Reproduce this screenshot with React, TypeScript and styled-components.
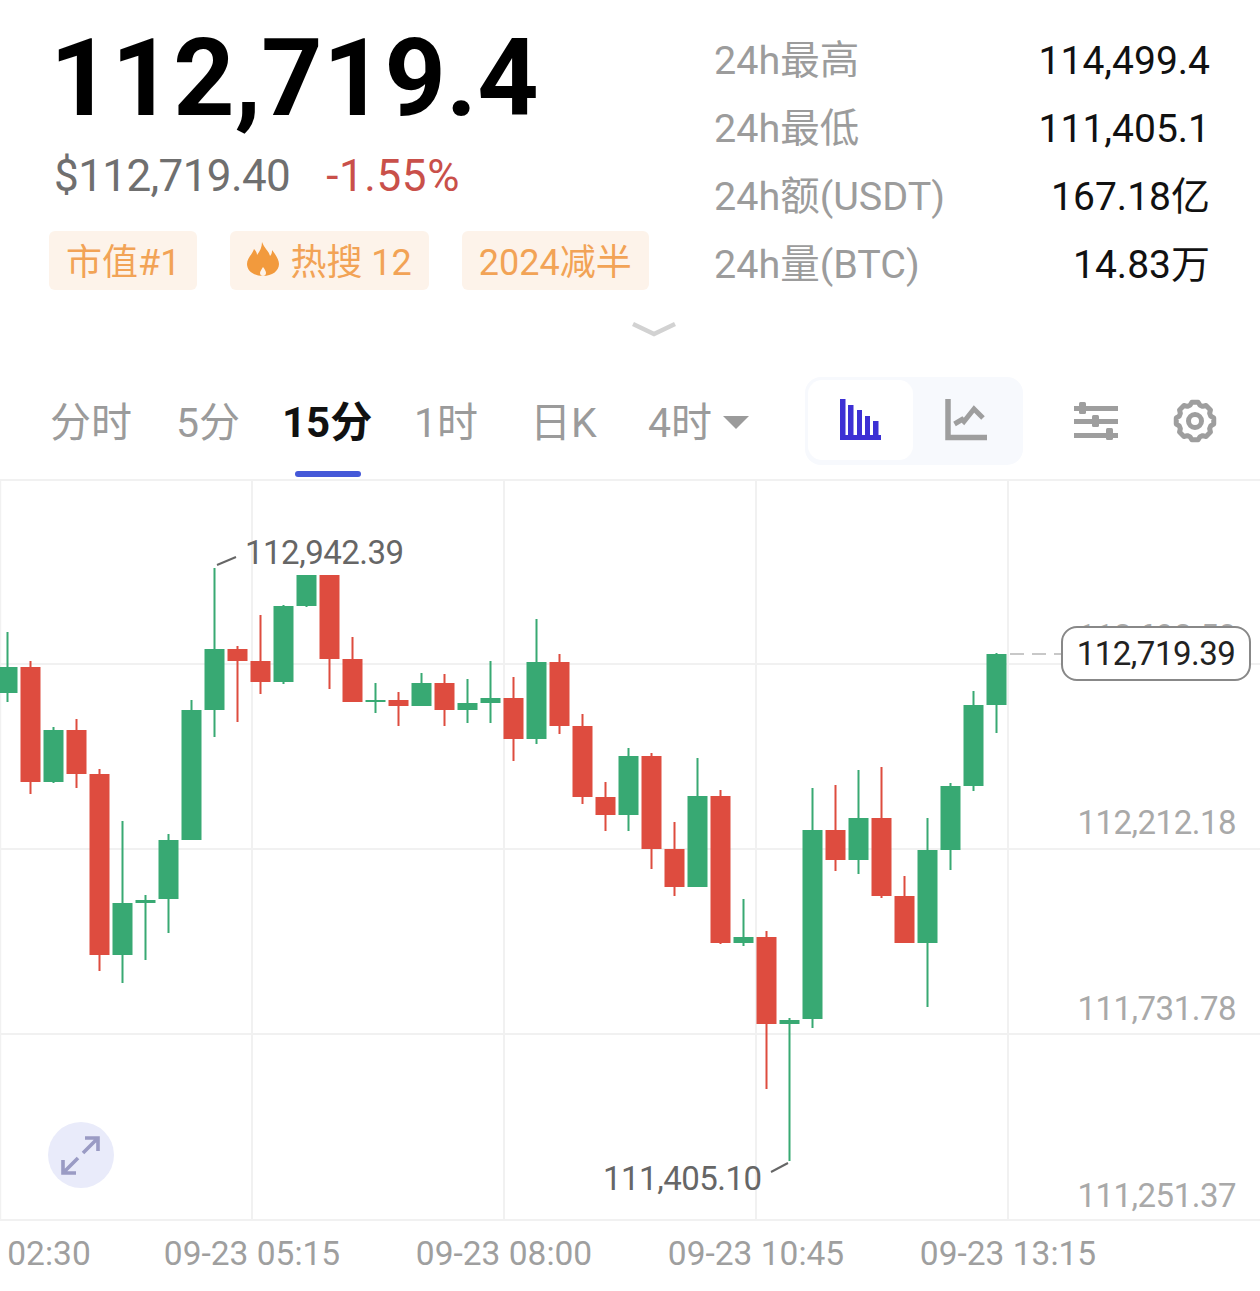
import React from "react";
import styled, { createGlobalStyle } from "styled-components";

const FONT = `Roboto, "Noto Sans CJK SC", sans-serif`;

const Global = createGlobalStyle`
  html, body { margin: 0; padding: 0; background: #fff; }
  body { font-family: ${FONT}; }
`;

const Page = styled.div`
  width: 1260px;
  height: 1291px;
  overflow: hidden;
  background: #fff;
  display: flex;
  flex-direction: column;
`;

const Header = styled.header`
  height: 313px;
  display: flex;
  justify-content: space-between;
  padding: 0 50px 0 49px;
  box-sizing: border-box;
`;

const Summary = styled.div`
  display: flex;
  flex-direction: column;
`;

const LastPrice = styled.div`
  margin: 25px 0 0 1px;
  height: 107px;
  font-size: 107px;
  line-height: 107px;
  font-weight: 700;
  color: #000;
  letter-spacing: 0.2px;
  white-space: nowrap;
`;

const Quote = styled.div`
  margin: 20px 0 0 5px;
  display: flex;
  gap: 36px;
  font-size: 44px;
  line-height: 48px;
  letter-spacing: -0.6px;
`;

const Fiat = styled.span`
  color: #6f6f6f;
`;

const Change = styled.span`
  color: #c9504a;
  letter-spacing: 0.6px;
`;

const Tags = styled.div`
  margin-top: 31px;
  display: flex;
  gap: 33px;
`;

const Tag = styled.span`
  height: 59px;
  padding: 0 17px 4px;
  box-sizing: border-box;
  display: flex;
  align-items: center;
  gap: 11px;
  background: #fdf3ea;
  border-radius: 6px;
  color: #f2a356;
  font-size: 36px;
  white-space: nowrap;
`;

const Stats = styled.div`
  width: 496px;
  padding-top: 27px;
  display: flex;
  flex-direction: column;
`;

const StatRow = styled.div`
  height: 68px;
  display: flex;
  align-items: center;
  justify-content: space-between;
  line-height: 48px;
`;

const StatLabel = styled.span`
  color: #9c9c9c;
  font-size: 39.5px;
`;

const StatValue = styled.span`
  color: #111;
  font-size: 39px;
`;

const Expander = styled.div`
  height: 47px;
  padding: 8px 0 0 632px;
  box-sizing: border-box;
`;

const Toolbar = styled.nav`
  height: 119px;
  display: flex;
  align-items: center;
  position: relative;
`;

const TabList = styled.div`
  display: flex;
  align-items: center;
  height: 100%;
  padding-left: 50px;
  width: 805px;
  box-sizing: border-box;
`;

const Tab = styled.div<{ $active?: boolean; $w: number }>`
  position: relative;
  width: ${(p) => p.$w}px;
  flex: none;
  display: flex;
  align-items: center;
  gap: 11px;
  padding-bottom: 2px;
  font-size: ${(p) => (p.$active ? 42 : 41)}px;
  font-weight: ${(p) => (p.$active ? 700 : 400)};
  color: ${(p) => (p.$active ? "#111" : "#9b9b9b")};
  white-space: nowrap;
`;

const Indicator = styled.span`
  position: absolute;
  left: 13px;
  top: 83px;
  width: 66px;
  height: 6px;
  border-radius: 3px;
  background: #4458d8;
`;

const Caret = styled.span`
  width: 0;
  height: 0;
  border-left: 13px solid transparent;
  border-right: 13px solid transparent;
  border-top: 13px solid #9b9b9b;
  margin-top: 8px;
`;

const Toggle = styled.div`
  width: 218px;
  height: 88px;
  margin-top: 2px;
  display: flex;
  padding: 3px;
  box-sizing: border-box;
  border-radius: 16px;
  background: #f7f9fd;
`;

const ToggleCell = styled.div<{ $on?: boolean }>`
  width: 105px;
  height: 80px;
  display: flex;
  align-items: center;
  justify-content: center;
  border-radius: 14px;
  background: ${(p) => (p.$on ? "#fff" : "transparent")};
`;

const ToolIcons = styled.div`
  display: flex;
  align-items: center;
  margin: 2px 0 0 51px;
  gap: 55px;
`;

const Chart = styled.section`
  position: relative;
  height: 742px;
  flex: none;
`;

const ChartSvg = styled.svg`
  display: block;
  width: 1260px;
  height: 742px;
`;

const PriceLabel = styled.span<{ $top: number }>`
  position: absolute;
  right: 24px;
  top: ${(p) => p.$top}px;
  font-size: 33px;
  line-height: 40px;
  letter-spacing: -0.5px;
  color: #a9a9a9;
`;

const CurrentPrice = styled.span`
  position: absolute;
  left: 1061px;
  top: 147px;
  width: 190px;
  height: 55px;
  box-sizing: border-box;
  display: flex;
  align-items: center;
  justify-content: center;
  border: 2.5px solid #888;
  border-radius: 16px;
  background: #fff;
  color: #222;
  font-size: 33px;
  letter-spacing: -0.5px;
`;

const Extreme = styled.span<{ $left: number; $top: number }>`
  position: absolute;
  left: ${(p) => p.$left}px;
  top: ${(p) => p.$top}px;
  font-size: 33px;
  line-height: 40px;
  letter-spacing: -0.5px;
  color: #666;
`;

const ExpandButton = styled.button`
  position: absolute;
  left: 48px;
  top: 643px;
  width: 66px;
  height: 66px;
  padding: 0;
  border: 0;
  border-radius: 50%;
  background: #e9ebfa;
  display: flex;
  align-items: center;
  justify-content: center;
`;

const TimeAxis = styled.div`
  position: relative;
  height: 70px;
`;

const TimeLabel = styled.span<{ $center: number }>`
  position: absolute;
  top: 13px;
  left: ${(p) => p.$center}px;
  transform: translateX(-50%);
  font-size: 33.5px;
  line-height: 40px;
  color: #9f9f9f;
  white-space: nowrap;
`;

type Candle = [number, number, number, number, "g" | "r"];

const candles: Candle[] = [
  [632, 667, 693, 702, "g"],
  [661, 667, 782, 794, "r"],
  [727, 730, 782, 783, "g"],
  [719, 730, 774, 788, "r"],
  [769, 774, 955, 971, "r"],
  [821, 903, 955, 983, "g"],
  [895, 900, 903, 960, "g"],
  [834, 840, 899, 933, "g"],
  [700, 710, 840, 840, "g"],
  [568, 649, 710, 737, "g"],
  [646, 649, 661, 722, "r"],
  [615, 661, 682, 694, "r"],
  [605, 606, 682, 684, "g"],
  [575, 575, 606, 607, "g"],
  [575, 575, 659, 689, "r"],
  [637, 659, 702, 702, "r"],
  [683, 700, 702, 713, "g"],
  [692, 700, 706, 726, "r"],
  [673, 683, 706, 706, "g"],
  [674, 683, 710, 726, "r"],
  [679, 703, 710, 723, "g"],
  [661, 698, 703, 723, "g"],
  [677, 698, 739, 761, "r"],
  [619, 662, 739, 744, "g"],
  [654, 662, 726, 734, "r"],
  [714, 726, 797, 804, "r"],
  [782, 797, 815, 831, "r"],
  [748, 756, 815, 831, "g"],
  [753, 756, 849, 869, "r"],
  [822, 849, 887, 896, "r"],
  [758, 796, 887, 887, "g"],
  [790, 796, 943, 944, "r"],
  [899, 937, 943, 946, "g"],
  [931, 937, 1024, 1089, "r"],
  [1018, 1020, 1024, 1161, "g"],
  [788, 830, 1019, 1028, "g"],
  [785, 830, 860, 871, "r"],
  [770, 818, 860, 874, "g"],
  [767, 818, 896, 898, "r"],
  [876, 896, 943, 943, "r"],
  [818, 850, 943, 1007, "g"],
  [783, 786, 850, 870, "g"],
  [691, 705, 786, 791, "g"],
  [653, 654, 705, 733, "g"],
];

const COLORS = { g: "#38a973", r: "#de4c3f" };
const GRID = "#f1f1f1";

const gearPath = (() => {
  const cx = 22;
  const cy = 22;
  const teeth = 8;
  const pts: string[] = [];
  for (let i = 0; i < teeth; i++) {
    const a = (i / teeth) * Math.PI * 2 - Math.PI / 2;
    const w = Math.PI / teeth;
    const p = (r: number, t: number) =>
      `${(cx + r * Math.cos(t)).toFixed(2)} ${(cy + r * Math.sin(t)).toFixed(2)}`;
    pts.push(p(16.5, a - w * 0.78), p(19, a - w * 0.42), p(19, a + w * 0.42), p(16.5, a + w * 0.78));
  }
  return `M${pts.join("L")}Z`;
})();

const BarsIcon = () => (
  <svg width="42" height="42" viewBox="0 0 42 42" fill="#3d30d4">
    <rect x="0" y="0" width="5.5" height="41" />
    <rect x="0" y="36" width="41" height="5" />
    <rect x="8" y="6" width="5.5" height="30" />
    <rect x="17" y="11" width="5" height="25" />
    <rect x="25" y="17" width="5" height="19" />
    <rect x="33" y="22" width="5.5" height="14" />
  </svg>
);

const LineIcon = () => (
  <svg width="42" height="42" viewBox="0 0 42 42" fill="none" stroke="#9e9e9e" strokeWidth="5.5">
    <path d="M3 0V38.5H42" />
    <path d="M9.5 25L17 20.5L19 22.5L29 10L38 19" strokeWidth="5" />
  </svg>
);

const SlidersIcon = () => (
  <svg width="44" height="38" viewBox="0 0 44 38" fill="#9e9e9e">
    <rect x="0" y="4" width="44" height="5" />
    <rect x="0" y="17" width="44" height="5" />
    <rect x="0" y="31" width="44" height="5" />
    <rect x="5" y="0" width="7" height="12" rx="1.5" />
    <rect x="18" y="13" width="7" height="12" rx="1.5" />
    <rect x="32" y="26" width="7" height="12" rx="1.5" />
  </svg>
);

const GearIcon = () => (
  <svg width="44" height="44" viewBox="0 0 44 44" fill="none" stroke="#9e9e9e" strokeWidth="5" strokeLinejoin="round">
    <path d={gearPath} />
    <circle cx="22" cy="22" r="6.5" />
  </svg>
);

const Flame = () => (
  <svg width="32" height="34" viewBox="0 0 32 34">
    <path
      fill="#f29a3d"
      d="M15 0C17 6 22 9 23 14C25 12 25 10 25 8C29 13 32 18 32 22C32 29 25 34 16 34C7 34 0 29 0 22C0 16 5 13 7 7C9 9 10 11 10 13C13 9 15 5 15 0Z"
    />
    <path fill="#fdf3ea" d="M16 25C18 27.5 19 29.5 19 31C19 33 17.5 34 16 34C14.5 34 13 33 13 31C13 29.5 14.5 27.5 16 25Z" />
  </svg>
);

const stats = [
  ["24h最高", "114,499.4"],
  ["24h最低", "111,405.1"],
  ["24h额(USDT)", "167.18亿"],
  ["24h量(BTC)", "14.83万"],
];

const prices: [string, number][] = [
  ["112,692.58", 138],
  ["112,212.18", 324],
  ["111,731.78", 510],
  ["111,251.37", 697],
];

const times: [string, number][] = [
  ["02:30", 49],
  ["09-23 05:15", 252],
  ["09-23 08:00", 504],
  ["09-23 10:45", 756],
  ["09-23 13:15", 1008],
];

export default function App() {
  return (
    <Page>
      <Global />
      <Header>
        <Summary>
          <LastPrice>112,719.4</LastPrice>
          <Quote>
            <Fiat>$112,719.40</Fiat>
            <Change>-1.55%</Change>
          </Quote>
          <Tags>
            <Tag>市值#1</Tag>
            <Tag>
              <Flame />
              热搜 12
            </Tag>
            <Tag>2024减半</Tag>
          </Tags>
        </Summary>
        <Stats>
          {stats.map(([k, v]) => (
            <StatRow key={k}>
              <StatLabel>{k}</StatLabel>
              <StatValue>{v}</StatValue>
            </StatRow>
          ))}
        </Stats>
      </Header>
      <Expander>
        <svg width="44" height="16" viewBox="0 0 44 16" fill="none" stroke="#d2d2d2" strokeWidth="4.5">
          <path d="M1 3L22 13L43 3" />
        </svg>
      </Expander>
      <Toolbar>
        <TabList>
          <Tab $w={126}>分时</Tab>
          <Tab $w={106}>5分</Tab>
          <Tab $w={132} $active>
            15分
            <Indicator />
          </Tab>
          <Tab $w={116}>1时</Tab>
          <Tab $w={118}>日K</Tab>
          <Tab $w={107}>
            4时
            <Caret />
          </Tab>
        </TabList>
        <Toggle>
          <ToggleCell $on>
            <BarsIcon />
          </ToggleCell>
          <ToggleCell>
            <LineIcon />
          </ToggleCell>
        </Toggle>
        <ToolIcons>
          <SlidersIcon />
          <GearIcon />
        </ToolIcons>
      </Toolbar>
      <Chart>
        <ChartSvg viewBox="0 479 1260 742">
          {[480, 664, 849, 1034, 1220].map((y) => (
            <line key={y} x1="0" x2="1260" y1={y} y2={y} stroke={GRID} strokeWidth="2" />
          ))}
          {[0.5, 252, 504, 756, 1008].map((x) => (
            <line key={x} x1={x} x2={x} y1="479" y2="1220" stroke={GRID} strokeWidth={x < 1 ? 1.5 : 2} />
          ))}
          {candles.map(([top, bodyTop, bodyBottom, bottom, side], i) => {
            const x = 7.5 + i * 23;
            return (
              <g key={i} fill={COLORS[side]}>
                <rect x={x - 1} y={top} width="2" height={bottom - top} />
                <rect x={x - 10} y={bodyTop} width="20" height={Math.max(bodyBottom - bodyTop, 2)} />
              </g>
            );
          })}
          <line x1="217" y1="565" x2="236" y2="557" stroke="#666" strokeWidth="2" />
          <line x1="771" y1="1172" x2="788" y2="1163" stroke="#666" strokeWidth="2" />
          <line x1="1010" y1="654" x2="1062" y2="654" stroke="#c8c8c8" strokeWidth="2" strokeDasharray="14 8" />
        </ChartSvg>
        {prices.map(([label, top]) => (
          <PriceLabel key={label} $top={top}>
            {label}
          </PriceLabel>
        ))}
        <CurrentPrice>112,719.39</CurrentPrice>
        <Extreme $left={245} $top={54}>
          112,942.39
        </Extreme>
        <Extreme $left={603} $top={680}>
          111,405.10
        </Extreme>
        <ExpandButton>
          <svg width="40" height="40" viewBox="0 0 40 40" fill="none" stroke="#9a9bc4" strokeWidth="3.6">
            <path d="M22 18L37 3M24 3H37V16" />
            <path d="M17 23L2 38M2 25V38H15" />
          </svg>
        </ExpandButton>
      </Chart>
      <TimeAxis>
        {times.map(([label, c]) => (
          <TimeLabel key={label} $center={c}>
            {label}
          </TimeLabel>
        ))}
      </TimeAxis>
    </Page>
  );
}
